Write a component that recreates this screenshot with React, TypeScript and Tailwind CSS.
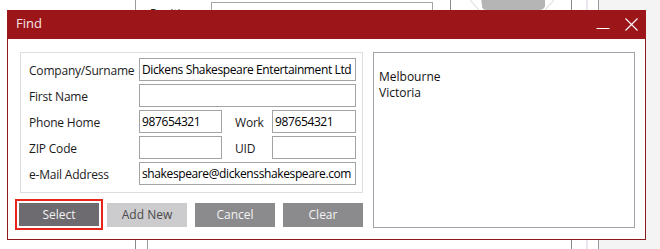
import React from "react";

const FONT = "font-['Open_Sans','Noto_Sans',sans-serif]";

function RightRail() {
  return (
    <div className="flex h-full shrink-0">
      <div className="w-[15px] border-l border-[#8a8a8a]" />
      <div className="w-[12px] border-l-2 border-[#ebe6f2]" />
      <div className="w-[62px] border-l border-[#9a9a9a] bg-[#f4f4f4]" />
    </div>
  );
}

function Field({ value, width }: { value?: string; width: string }) {
  return (
    <div
      className={`${width} h-[23px] border border-[#a3a3a3] bg-white pl-[2px] flex items-center text-[12px] tracking-[-0.38px] text-black whitespace-nowrap overflow-hidden`}
    >
      {value}
    </div>
  );
}

function Row({ label, children }: { label: string; children: React.ReactNode }) {
  return (
    <div className="flex items-center h-[23px]">
      <div className="w-[110px] text-[12px] tracking-[-0.2px] text-[#1b1b1b] pt-[2px]">{label}</div>
      {children}
    </div>
  );
}

export default function App() {
  return (
    <div className={`relative w-[660px] h-[249px] overflow-hidden bg-white ${FONT}`}>
      {/* window behind the dialog */}
      <div className="flex flex-col h-full">
        <div className="flex h-[10px]">
          <div className="w-[135px]" />
          <div className="w-[76px] border-l border-[#9a9a9a] pl-[14px] pt-[6px] text-[12px] leading-[16px] text-[#222]">
            Position
          </div>
          <div className="w-[222px] h-[12px] mt-[2px] border border-[#a5a5a5]" />
          <div className="w-[17px]" />
          <div className="w-[121px] border-l border-[#8a8a8a]">
            <svg width="120" height="10" viewBox="0 0 120 10">
              <line x1="19" y1="0" x2="28" y2="10" stroke="#d4d4d4" strokeWidth="1" />
              <line x1="103" y1="0" x2="94" y2="10" stroke="#d4d4d4" strokeWidth="1" />
              <path d="M30 -2 H94 V6 Q93 10 88 10 H36 Q31 10 31 6 Z" fill="#b5b5b5" />
            </svg>
          </div>
          <RightRail />
        </div>
        <div className="flex flex-1">
          <div className="w-[571px]" />
          <RightRail />
        </div>
        <div className="flex h-[9px]">
          <div className="w-[135px]" />
          <div className="w-[12px] border-l border-[#8a8a8a]" />
          <div className="w-[424px] border-l border-[#9a9a9a]" />
          <RightRail />
        </div>
      </div>

      {/* Find dialog */}
      <div className="absolute left-[7px] top-[10px] w-[639px] h-[230px] flex flex-col">
        <div className="h-[29px] bg-[#9b1519] flex items-center pl-[9px] pr-[8px]">
          <span className="text-[13px] text-[#f4e6e6] pb-[1px]">Find</span>
          <div className="flex-1" />
          <svg width="14" height="14" viewBox="0 0 14 14" className="mr-[15px] mt-[1px]">
            <line x1="0.5" y1="10.5" x2="13.5" y2="10.5" stroke="#ffffff" strokeWidth="1" />
          </svg>
          <svg width="13" height="13" viewBox="0 0 13 13" className="mb-[1px]">
            <line x1="0.5" y1="0.5" x2="12.5" y2="12.5" stroke="#ffffff" strokeWidth="1.1" />
            <line x1="12.5" y1="0.5" x2="0.5" y2="12.5" stroke="#ffffff" strokeWidth="1.1" />
          </svg>
        </div>
        <div className="flex-1 bg-white border-x border-b border-[#8b1a1a] flex pl-[11px] pr-[10px] pt-[13px]">
          <div className="w-[344px] flex flex-col">
            <div className="ml-[1px] w-[343px] h-[141px] border border-[#dedede] pl-[8px] pr-[6px] pt-[5px] flex flex-col gap-[3px]">
              <Row label="Company/Surname">
                <Field width="w-[217px]" value="Dickens Shakespeare Entertainment Ltd" />
              </Row>
              <Row label="First Name">
                <Field width="w-[217px]" />
              </Row>
              <Row label="Phone Home">
                <Field width="w-[83px]" value="987654321" />
                <div className="w-[13px]" />
                <div className="w-[37px] text-[12px] tracking-[-0.2px] text-[#1b1b1b] pt-[2px]">Work</div>
                <Field width="w-[84px]" value="987654321" />
              </Row>
              <Row label="ZIP Code">
                <Field width="w-[83px]" />
                <div className="w-[13px]" />
                <div className="w-[37px] text-[12px] tracking-[-0.2px] text-[#1b1b1b] pt-[2px]">UID</div>
                <Field width="w-[84px]" />
              </Row>
              <Row label="e-Mail Address">
                <Field width="w-[217px]" value="shakespeare@dickensshakespeare.com" />
              </Row>
            </div>
            <div className="flex gap-[8px] mt-[10px]">
              <button className="w-[80px] h-[23px] bg-[#6d6b6f] text-[12px] text-[#f2f2f2] outline-2 outline-offset-2 outline-[#e8251c]">
                Select
              </button>
              <button className="w-[80px] h-[24px] bg-[#cccbce] text-[12px] text-[#4a4a4a]">
                Add New
              </button>
              <button className="w-[80px] h-[24px] bg-[#8b8a8d] text-[12px] text-[#f4f4f4]">
                Cancel
              </button>
              <button className="w-[80px] h-[24px] bg-[#8b8a8d] text-[12px] text-[#f4f4f4]">
                Clear
              </button>
            </div>
          </div>
          <div className="ml-[10px] w-[262px] h-[176px] border border-[#a3a3ab] pl-[5px] pt-[16px] text-[12px] leading-[16px] text-[#111]">
            <div>Melbourne</div>
            <div>Victoria</div>
          </div>
        </div>
      </div>
    </div>
  );
}
